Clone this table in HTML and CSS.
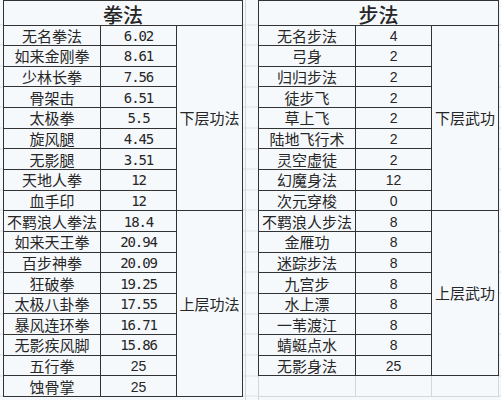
FILE: index.html
```html
<!DOCTYPE html>
<html lang="zh-CN">
<head>
<meta charset="utf-8">
<title>拳法 / 步法</title>
<link rel="stylesheet" href="styles.css">
</head>
<body>
<div class="sheet">
  <table class="tbl tbl-left">
    <colgroup><col class="c-name"><col class="c-val"><col class="c-cat"></colgroup>
    <tr class="head"><th colspan="3">拳法</th></tr>
    <tr><td>无名拳法</td><td class="num">6.02</td><td class="cat" rowspan="9">下层功法</td></tr>
    <tr><td>如来金刚拳</td><td class="num">8.61</td></tr>
    <tr><td>少林长拳</td><td class="num">7.56</td></tr>
    <tr><td>骨架击</td><td class="num">6.51</td></tr>
    <tr><td>太极拳</td><td class="num">5.5</td></tr>
    <tr><td>旋风腿</td><td class="num">4.45</td></tr>
    <tr><td>无影腿</td><td class="num">3.51</td></tr>
    <tr><td>天地人拳</td><td class="num">12</td></tr>
    <tr><td>血手印</td><td class="num">12</td></tr>
    <tr><td>不羁浪人拳法</td><td class="num">18.4</td><td class="cat" rowspan="9">上层功法</td></tr>
    <tr><td>如来天王拳</td><td class="num">20.94</td></tr>
    <tr><td>百步神拳</td><td class="num">20.09</td></tr>
    <tr><td>狂破拳</td><td class="num">19.25</td></tr>
    <tr><td>太极八卦拳</td><td class="num">17.55</td></tr>
    <tr><td>暴风连环拳</td><td class="num">16.71</td></tr>
    <tr><td>无影疾风脚</td><td class="num">15.86</td></tr>
    <tr><td>五行拳</td><td class="int">25</td></tr>
    <tr><td>蚀骨掌</td><td class="int">25</td></tr>
  </table>
  <div class="gap"></div>
  <table class="tbl tbl-right">
    <colgroup><col class="c-name"><col class="c-val"><col class="c-cat2"></colgroup>
    <tr class="head"><th colspan="3">步法</th></tr>
    <tr><td>无名步法</td><td class="int">4</td><td class="cat" rowspan="9">下层武功</td></tr>
    <tr><td>弓身</td><td class="int">2</td></tr>
    <tr><td>归归步法</td><td class="int">2</td></tr>
    <tr><td>徒步飞</td><td class="int">2</td></tr>
    <tr><td>草上飞</td><td class="int">2</td></tr>
    <tr><td>陆地飞行术</td><td class="int">2</td></tr>
    <tr><td>灵空虚徒</td><td class="int">2</td></tr>
    <tr><td>幻魔身法</td><td class="int">12</td></tr>
    <tr><td>次元穿梭</td><td class="int">0</td></tr>
    <tr><td>不羁浪人步法</td><td class="int">8</td><td class="cat" rowspan="8">上层武功</td></tr>
    <tr><td>金雁功</td><td class="int">8</td></tr>
    <tr><td>迷踪步法</td><td class="int">8</td></tr>
    <tr><td>九宫步</td><td class="int">8</td></tr>
    <tr><td>水上漂</td><td class="int">8</td></tr>
    <tr><td>一苇渡江</td><td class="int">8</td></tr>
    <tr><td>蜻蜓点水</td><td class="int">8</td></tr>
    <tr><td>无影身法</td><td class="int">25</td></tr>
    <tr class="blank"><td></td><td></td><td></td></tr>
  </table>
</div>
</body>
</html>
```

FILE: styles.css
```css
html, body {
  margin: 0;
  padding: 0;
}
body {
  width: 501px;
  height: 400px;
  overflow: hidden;
  background-color: #f6f9fc;
  font-family: "Noto Sans CJK SC", "Noto Sans", sans-serif;
  color: #262626;
}
.sheet {
  display: flex;
  align-items: flex-start;
  padding-left: 3px;
  height: 400px;
  background-image: repeating-linear-gradient(to bottom,
    transparent 0, transparent 19.65px, #d6dbe0 19.65px, #d6dbe0 20.65px);
  background-position: 0 4.5px;
}
.gap {
  width: 14px;
  height: 400px;
  flex: none;
  box-sizing: border-box;
  margin-left: 2px;
  margin-right: -1px;
  border-left: 1px solid #d2d7dc;
  border-right: 1px solid #d2d7dc;
  background-color: #f6f9fc;
  background-image: repeating-linear-gradient(to bottom,
    transparent 0, transparent 19.65px, #dde1e5 19.65px, #dde1e5 20.65px);
  background-position: 0 4.5px;
}
.tbl {
  border-collapse: collapse;
  table-layout: fixed;
  background-color: #f6f9fc;
  flex: none;
}
.tbl-left { width: 239px; }
.tbl-right { width: 240px; }
.c-name { width: 97px; }
.c-val { width: 76px; }
.c-cat { width: 66px; }
.c-cat2 { width: 67px; }
.tbl th, .tbl td {
  border: 1px solid #333;
  padding: 0;
  text-align: center;
  vertical-align: middle;
  white-space: nowrap;
}
.tbl tr { height: 20.65px; }
.tbl td {
  font-size: 15px;
  line-height: 16px;
  padding-top: 1px;
}
.tbl tr.head { height: 24.5px; }
.tbl th {
  font-size: 20px;
  font-weight: 500;
  line-height: 19px;
  padding-top: 4px;
}
.tbl td.num {
  font-family: "DejaVu Sans Mono", monospace;
  font-size: 14px;
  letter-spacing: -1.1px;
}
.tbl td.int {
  font-family: "Liberation Sans", sans-serif;
  font-size: 14px;
}
.tbl td.cat {
  padding-top: 0;
  font-size: 15px;
}
.tbl tr.blank td {
  border: 1px solid #d2d7dc;
  border-top-color: #333;
}
```
